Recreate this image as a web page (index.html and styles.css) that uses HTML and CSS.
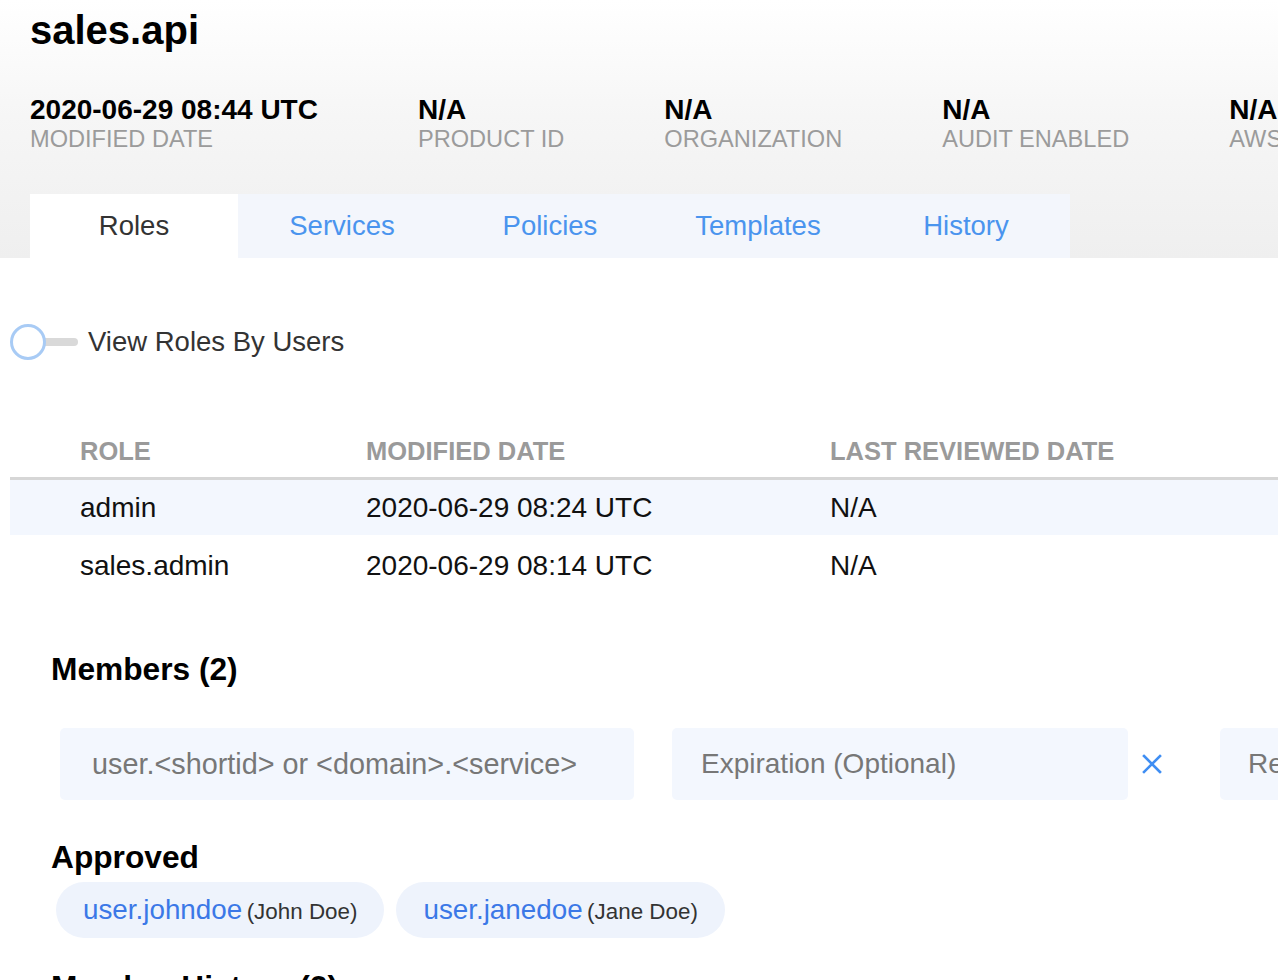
FILE: index.html
```html
<!DOCTYPE html>
<html lang="en">
<head>
<meta charset="utf-8">
<title>sales.api</title>
<link rel="stylesheet" href="styles.css">
</head>
<body>
<div class="page">
  <header class="domain-header">
    <h1 class="domain-title">sales.api</h1>
    <div class="meta-row">
      <div class="meta-item"><div class="meta-value">2020-06-29 08:44 UTC</div><div class="meta-label">MODIFIED DATE</div></div>
      <div class="meta-item"><div class="meta-value">N/A</div><div class="meta-label">PRODUCT ID</div></div>
      <div class="meta-item"><div class="meta-value">N/A</div><div class="meta-label">ORGANIZATION</div></div>
      <div class="meta-item"><div class="meta-value">N/A</div><div class="meta-label">AUDIT ENABLED</div></div>
      <div class="meta-item"><div class="meta-value">N/A</div><div class="meta-label">AWS ACCOUNT ID</div></div>
    </div>
    <nav class="tabs">
      <div class="tab tab-active">Roles</div>
      <div class="tab">Services</div>
      <div class="tab">Policies</div>
      <div class="tab">Templates</div>
      <div class="tab">History</div>
    </nav>
  </header>

  <main class="content">
    <div class="toggle-row">
      <span class="toggle"><span class="toggle-track"></span><span class="toggle-knob"></span></span>
      <span class="toggle-label">View Roles By Users</span>
    </div>

    <div class="role-table">
      <div class="role-row role-head">
        <div>ROLE</div><div>MODIFIED DATE</div><div>LAST REVIEWED DATE</div>
      </div>
      <div class="role-row role-selected">
        <div>admin</div><div>2020-06-29 08:24 UTC</div><div>N/A</div>
      </div>
      <div class="role-row role-second">
        <div>sales.admin</div><div>2020-06-29 08:14 UTC</div><div>N/A</div>
      </div>
    </div>

    <section class="members">
      <h2 class="section-title">Members (2)</h2>
      <div class="add-row">
        <input class="field field-member" type="text" placeholder="user.&lt;shortid&gt; or &lt;domain&gt;.&lt;service&gt;">
        <div class="expiry-group">
          <input class="field field-expiry" type="text" placeholder="Expiration (Optional)">
          <svg class="clear-icon" width="20" height="20" viewBox="0 0 20 20" aria-hidden="true">
            <path d="M2 2 L18 18 M18 2 L2 18" stroke="#3f8ef3" stroke-width="2.6" stroke-linecap="square" fill="none"/>
          </svg>
        </div>
        <input class="field field-reason" type="text" placeholder="Reason">
      </div>

      <h2 class="section-title approved-title">Approved</h2>
      <div class="chips">
        <span class="chip"><span class="chip-id">user.johndoe</span> <span class="chip-name">(John Doe)</span></span>
        <span class="chip"><span class="chip-id">user.janedoe</span> <span class="chip-name">(Jane Doe)</span></span>
      </div>

      <h2 class="section-title history-title">Member History (2)</h2>
    </section>
  </main>
</div>
</body>
</html>
```

FILE: styles.css
```css
html, body {
  margin: 0;
  padding: 0;
  overflow: hidden;
  background: #ffffff;
}

body {
  font-family: "Liberation Sans", Arial, Helvetica, sans-serif;
  color: #222;
}

.page {
  width: 1500px;
}

/* ---------- header ---------- */
.domain-header {
  background: linear-gradient(#ffffff 0%, #f6f6f6 45%, #efefef 100%);
  padding: 10px 0 0 30px;
  height: 248px;
}

.domain-title {
  margin: 0;
  font-size: 40px;
  line-height: 40px;
  font-weight: 700;
  color: #000;
}

.meta-row {
  display: flex;
  gap: 100px;
  margin-top: 46px;
  white-space: nowrap;
}

.meta-item {
  flex: none;
}

.meta-value {
  font-size: 28px;
  line-height: 28px;
  font-weight: 700;
  color: #000;
}

.meta-label {
  font-size: 23.6px;
  line-height: 28px;
  margin-top: 1px;
  color: #9b9b9b;
}

.tabs {
  display: flex;
  margin-top: 41px;
  width: 1040px;
  background: #f3f6fc;
}

.tab {
  width: 208px;
  height: 64px;
  line-height: 64px;
  text-align: center;
  font-size: 27.5px;
  color: #4a94ee;
}

.tab-active {
  background: #ffffff;
  color: #333;
}

/* ---------- content ---------- */
.content {
  padding-left: 10px;
}

.toggle-row {
  display: flex;
  align-items: center;
  margin-top: 66px;
  height: 36px;
}

.toggle {
  position: relative;
  width: 68px;
  height: 36px;
  flex: none;
}

.toggle-track {
  position: absolute;
  left: 26px;
  top: 14px;
  width: 42px;
  height: 8px;
  border-radius: 4px;
  background: #d9d9d9;
}

.toggle-knob {
  position: absolute;
  left: 0;
  top: 0;
  width: 30px;
  height: 30px;
  border: 3px solid #a8cbf5;
  border-radius: 50%;
  background: #ffffff;
}

.toggle-label {
  margin-left: 10px;
  font-size: 27.5px;
  color: #333;
}

.role-table {
  margin-top: 69px;
}

.role-row {
  display: grid;
  grid-template-columns: 286px 464px 1fr;
  padding-left: 70px;
  height: 55px;
  line-height: 55px;
  font-size: 28px;
  color: #111;
}

.role-head {
  box-sizing: border-box;
  height: 51px;
  padding-top: 7px;
  line-height: 30px;
  font-size: 25.5px;
  font-weight: 700;
  color: #9a9a9a;
  border-bottom: 3px solid #d6d6d6;
}

.role-selected {
  background: #f3f7fe;
}

.role-second {
  box-sizing: border-box;
  height: 58px;
  padding-top: 3px;
}

/* ---------- members ---------- */
.members {
  padding-left: 41px;
}

.section-title {
  margin: 58px 0 0 0;
  font-size: 31.7px;
  line-height: 36px;
  font-weight: 700;
  color: #000;
}

.add-row {
  display: flex;
  align-items: center;
  margin-top: 41px;
  margin-left: 9px;
  white-space: nowrap;
}

.field {
  flex: none;
  height: 72px;
  box-sizing: border-box;
  border: none;
  border-radius: 5px;
  background: #f3f7fe;
  font-family: "Liberation Sans", Arial, Helvetica, sans-serif;
  font-size: 28px;
  color: #333;
  outline: none;
}

.field::placeholder {
  color: #777;
  opacity: 1;
}

.field-member {
  width: 574px;
  padding-left: 32px;
  font-size: 28.8px;
}

.expiry-group {
  display: flex;
  align-items: center;
  margin-left: 38px;
}

.field-expiry {
  width: 456px;
  padding-left: 29px;
}

.clear-icon {
  margin-left: 14px;
  flex: none;
}

.field-reason {
  width: 400px;
  margin-left: 58px;
  padding-left: 28px;
}

.approved-title {
  margin-top: 39px;
}

.chips {
  display: flex;
  gap: 12px;
  margin-top: 7px;
  margin-left: 5px;
}

.chip {
  height: 56px;
  line-height: 56px;
  padding: 0 27px;
  border-radius: 28px;
  background: #eef3fc;
  white-space: nowrap;
}

.chip-id {
  font-size: 27.8px;
  color: #3b78e7;
}

.chip-name {
  font-size: 22.4px;
  color: #333;
}

.history-title {
  margin-top: 31px;
}
```
